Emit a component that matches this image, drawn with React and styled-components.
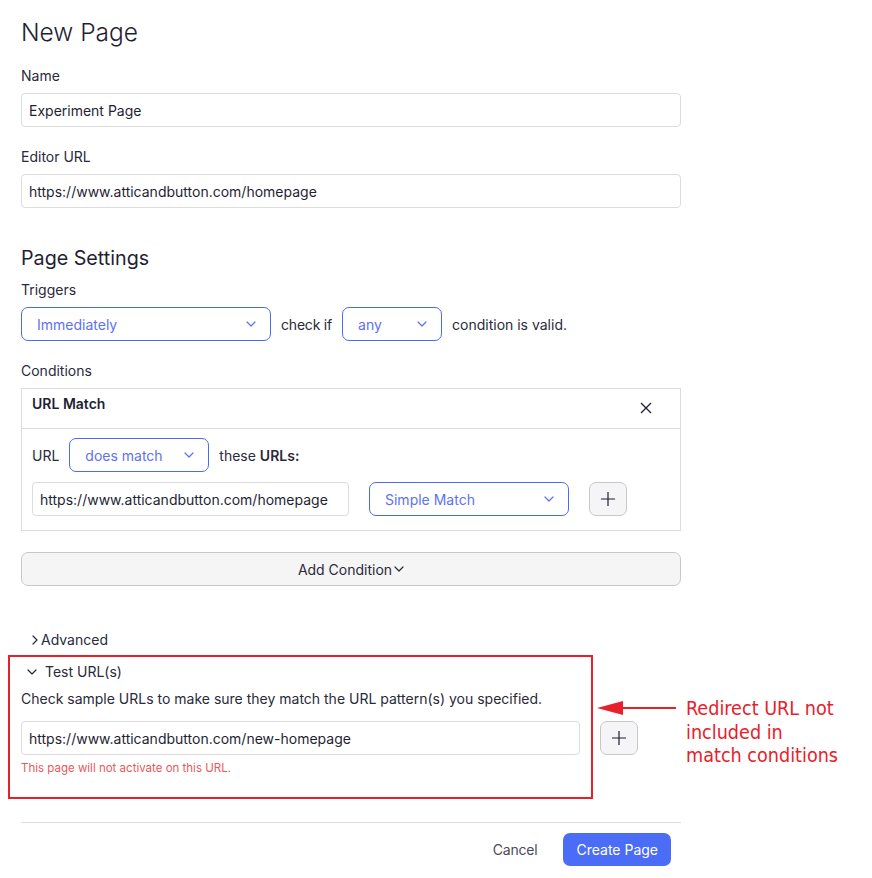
import React from "react";
import styled, { createGlobalStyle } from "styled-components";

const Global = createGlobalStyle`
  html, body { margin: 0; padding: 0; background: #fff; }
  body { font-family: Inter, "Noto Sans", sans-serif; color: #1f1f33; }
  * { box-sizing: border-box; }
`;

const Page = styled.div`
  width: 872px;
  padding: 16px 0 0 21px;
`;

const Form = styled.div`
  width: 660px;
  display: flex;
  flex-direction: column;
`;

const Title = styled.h1`
  margin: 0;
  font-size: 24.5px;
  line-height: 32px;
  font-weight: 300;
  color: #1f1f33;
`;

const Section = styled.h2`
  margin: 36px 0 0;
  font-size: 19.7px;
  line-height: 28px;
  font-weight: 400;
  color: #1f1f33;
`;

const Label = styled.div`
  font-size: 14px;
  line-height: 20px;
  color: #2a2a3a;
  margin-top: ${(p) => p.$mt || 0}px;
  margin-bottom: 7px;
`;

const Input = styled.div`
  height: 34px;
  width: ${(p) => (p.$w ? `${p.$w}px` : "100%")};
  flex: ${(p) => (p.$grow ? "1" : "none")};
  border: 1px solid #dcdcdc;
  border-radius: 4px;
  padding: 0 7px;
  display: flex;
  align-items: center;
  font-size: 14px;
  color: #1f1f33;
  background: #fff;
`;

const Select = styled.div`
  height: 34px;
  width: ${(p) => p.$w}px;
  border: 1px solid #4a6cf0;
  border-radius: 7px;
  padding: 0 14px 0 15px;
  display: flex;
  align-items: center;
  justify-content: space-between;
  font-size: 14px;
  color: #5d72f0;
  background: #fff;
  flex: none;
`;

const Row = styled.div`
  display: flex;
  align-items: center;
  gap: ${(p) => p.$gap || 10}px;
  font-size: 14px;
  color: #2a2a3a;
`;

const Box = styled.div`
  border: 1px solid #dcdcdc;
`;

const BoxHeader = styled.div`
  height: 40px;
  border-bottom: 1px solid #dcdcdc;
  padding: 5px 28px 0 10px;
  display: flex;
  justify-content: space-between;
  align-items: flex-start;
`;

const BoxTitle = styled.div`
  font-size: 14px;
  line-height: 20px;
  font-weight: 600;
  color: #1f1f33;
`;

const CloseIcon = styled.svg`
  margin-top: 8px;
`;

const BoxBody = styled.div`
  padding: 9px 10px 14px 10px;
  display: flex;
  flex-direction: column;
  gap: 10px;
`;

const PlusButton = styled.div`
  width: 38px;
  height: 34px;
  border: 1px solid #c8c8c8;
  border-radius: 7px;
  background: #f5f5f7;
  display: flex;
  align-items: center;
  justify-content: center;
  flex: none;
  margin-left: ${(p) => p.$ml || 0}px;
`;

const AddCondition = styled.div`
  margin-top: 21px;
  height: 34px;
  border: 1px solid #c8c8c8;
  border-radius: 7px;
  background: #f5f5f5;
  display: flex;
  align-items: center;
  justify-content: center;
  gap: 2px;
  font-size: 14px;
  color: #2a2a3a;
`;

const Toggle = styled.div`
  display: flex;
  align-items: center;
  gap: ${(p) => p.$gap}px;
  padding-left: ${(p) => p.$pl}px;
  font-size: 14px;
  line-height: 20px;
  color: #2a2a3a;
  margin-top: ${(p) => p.$mt}px;
`;

const TestArea = styled.div`
  position: relative;
  margin-top: 12px;
  padding-bottom: 24px;
`;

const RedFrame = styled.div`
  position: absolute;
  left: -13px;
  top: -7px;
  width: 585px;
  bottom: 0;
  border: 2px solid #e8202a;
  pointer-events: none;
`;

const Description = styled.div`
  font-size: 14px;
  line-height: 20px;
  color: #2a2a3a;
  margin-top: 7px;
`;

const TestRow = styled.div`
  display: flex;
  align-items: center;
  margin-top: 12px;
  width: 617px;
`;

const ErrorText = styled.div`
  font-size: 11.5px;
  line-height: 14px;
  color: #e9585c;
  margin-top: 6px;
`;

const Annotation = styled.div`
  position: absolute;
  left: 576px;
  top: 39px;
  display: flex;
  align-items: flex-start;
  gap: 9px;
`;

const AnnotationText = styled.div`
  font-family: "DejaVu Sans Condensed", "DejaVu Sans", sans-serif;
  font-stretch: condensed;
  font-size: 19.6px;
  line-height: 23.5px;
  color: #e8202a;
  white-space: nowrap;
  margin-top: -4px;
`;

const Divider = styled.div`
  height: 1px;
  background: #dcdcdc;
  margin-top: 23px;
`;

const Footer = styled.div`
  display: flex;
  justify-content: flex-end;
  align-items: center;
  gap: 26px;
  padding-right: 10px;
  margin-top: 10px;
`;

const CancelButton = styled.div`
  font-size: 14px;
  color: #4a4a5a;
  letter-spacing: -0.2px;
`;

const PrimaryButton = styled.div`
  height: 33px;
  padding: 0 13px;
  border-radius: 7px;
  background: #4a6cf7;
  color: #fff;
  font-size: 14px;
  display: flex;
  align-items: center;
`;

const Chevron = ({ dir = "down", size = 10, color = "#5d72f0" }) => {
  const pts = dir === "down" ? "1,3 5,7 9,3" : "3,1 7,5 3,9";
  return (
    <svg width={size} height={size} viewBox="0 0 10 10" fill="none">
      <polyline points={pts} stroke={color} strokeWidth="1.2" strokeLinecap="round" strokeLinejoin="round" />
    </svg>
  );
};

const Plus = () => (
  <svg width="16" height="16" viewBox="0 0 16 16">
    <path d="M8 1v14M1 8h14" stroke="#1f1f33" strokeWidth="1.2" />
  </svg>
);

export default function App() {
  return (
    <>
      <Global />
      <Page>
        <Form>
          <Title>New Page</Title>
          <Label $mt={18}>Name</Label>
          <Input>Experiment Page</Input>
          <Label $mt={20}>Editor URL</Label>
          <Input>https://www.atticandbutton.com/homepage</Input>

          <Section>Page Settings</Section>
          <Label $mt={8}>Triggers</Label>
          <Row $gap={10}>
            <Select $w={250}>
              Immediately
              <Chevron />
            </Select>
            <span style={{ letterSpacing: "-0.2px" }}>check if</span>
            <Select $w={100}>
              any
              <Chevron />
            </Select>
            <span>condition is valid.</span>
          </Row>

          <Label $mt={20}>Conditions</Label>
          <Box>
            <BoxHeader>
              <BoxTitle>URL Match</BoxTitle>
              <CloseIcon width="12" height="12" viewBox="0 0 12 12">
                <path d="M1 1l10 10M11 1L1 11" stroke="#1f1f33" strokeWidth="1.3" />
              </CloseIcon>
            </BoxHeader>
            <BoxBody>
              <Row $gap={10}>
                <span>URL</span>
                <Select $w={140}>
                  does match
                  <Chevron />
                </Select>
                <span>
                  these <b style={{ fontWeight: 600 }}>URLs:</b>
                </span>
              </Row>
              <Row $gap={20}>
                <Input $w={317}>https://www.atticandbutton.com/homepage</Input>
                <Select $w={200}>
                  Simple Match
                  <Chevron />
                </Select>
                <PlusButton>
                  <Plus />
                </PlusButton>
              </Row>
            </BoxBody>
          </Box>

          <AddCondition>
            Add Condition
            <Chevron color="#2a2a3a" />
          </AddCondition>

          <Toggle $mt={44} $pl={9} $gap={1}>
            <Chevron dir="right" color="#2a2a3a" />
            Advanced
          </Toggle>

          <TestArea>
            <RedFrame />
            <Toggle $mt={0} $pl={6} $gap={8}>
              <Chevron color="#2a2a3a" />
              Test URL(s)
            </Toggle>
            <Description>
              Check sample URLs to make sure they match the URL pattern(s) you specified.
            </Description>
            <TestRow>
              <Input $grow>https://www.atticandbutton.com/new-homepage</Input>
              <PlusButton $ml={20}>
                <Plus />
              </PlusButton>
            </TestRow>
            <ErrorText>This page will not activate on this URL.</ErrorText>
            <Annotation>
              <svg width="80" height="14" viewBox="0 0 80 14">
                <path d="M26 7H79" stroke="#e8202a" strokeWidth="2" />
                <path d="M0 7L26 0V14Z" fill="#e8202a" />
              </svg>
              <AnnotationText>
                Redirect URL not
                <br />
                included in
                <br />
                match conditions
              </AnnotationText>
            </Annotation>
          </TestArea>

          <Divider />
          <Footer>
            <CancelButton>Cancel</CancelButton>
            <PrimaryButton>Create Page</PrimaryButton>
          </Footer>
        </Form>
      </Page>
    </>
  );
}
